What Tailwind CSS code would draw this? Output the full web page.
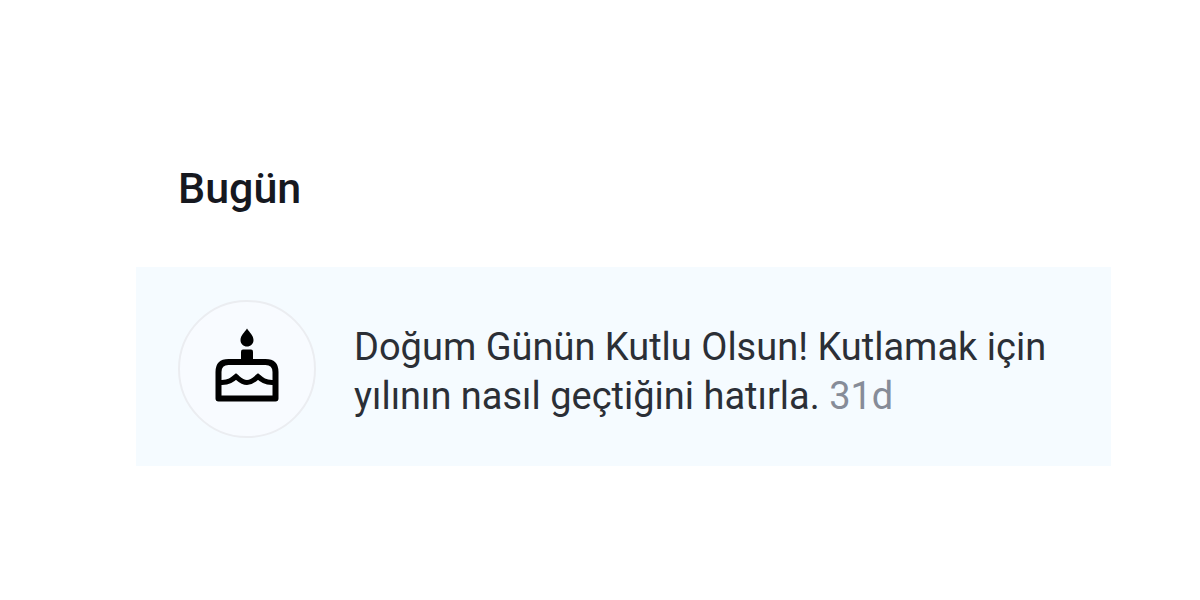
<!DOCTYPE html>
<html lang="tr">
<head>
    <meta charset="UTF-8">
    <meta name="viewport" content="width=device-width, initial-scale=1.0">
    <title>Bildirimler</title>
    <script src="https://cdn.jsdelivr.net/npm/@tailwindcss/browser@4"></script>
</head>
<body class="bg-white font-[Roboto,sans-serif]">
    <main class="pl-[136px] pr-[89px] pt-[160px] pb-8">
        <h2 class="px-[42px] mb-[51px] text-[43px] leading-[56px] font-medium text-[#16181f]">Bugün</h2>

        <div class="flex items-start gap-[38px] bg-[#f5fbff] pl-[42px] pr-[60px] pt-[33px] pb-[28px]">
            <div class="w-[138px] h-[138px] shrink-0 rounded-full border-2 border-[#ebedf1] bg-[#f8fbff] flex items-center justify-center">
                <svg class="w-[84px] h-[90px]" viewBox="0 4 84 90" fill="none" stroke="#000" aria-hidden="true">
                    <path d="M42 8.500C39.500 12.500 35.500 15.500 35.500 20C35.500 24 38.500 26.500 42 26.500C45.500 26.500 48.500 24 48.500 20C48.500 15.500 44.500 12.500 42 8.500Z" fill="#000" stroke="none"></path>
                    <path d="M36 42V31.500Q36 29.500 38 29.500H46Q48 29.500 48 31.500V42Z" fill="#000" stroke="none"></path>
                    <path d="M13.500 78.500V52Q13.500 42 23.500 42H60.500Q70.500 42 70.500 52V78.500Z" stroke-width="6" stroke-linejoin="round"></path>
                    <path d="M14 62.500H17C24 62.500 27 60 31 56.500C35 60 37 62.500 42 62.500C47 62.500 49 60 53 56.500C57 60 60 62.500 67 62.500H70" stroke-width="5"></path>
                </svg>
            </div>
            <p class="pt-[23px] text-[38px] leading-[49px] text-[#2b2f36]">
                Doğum Günün Kutlu Olsun! Kutlamak için yılının nasıl geçtiğini hatırla. <span class="text-[#868c98]">31d</span>
            </p>
        </div>
    </main>
</body>
</html>
